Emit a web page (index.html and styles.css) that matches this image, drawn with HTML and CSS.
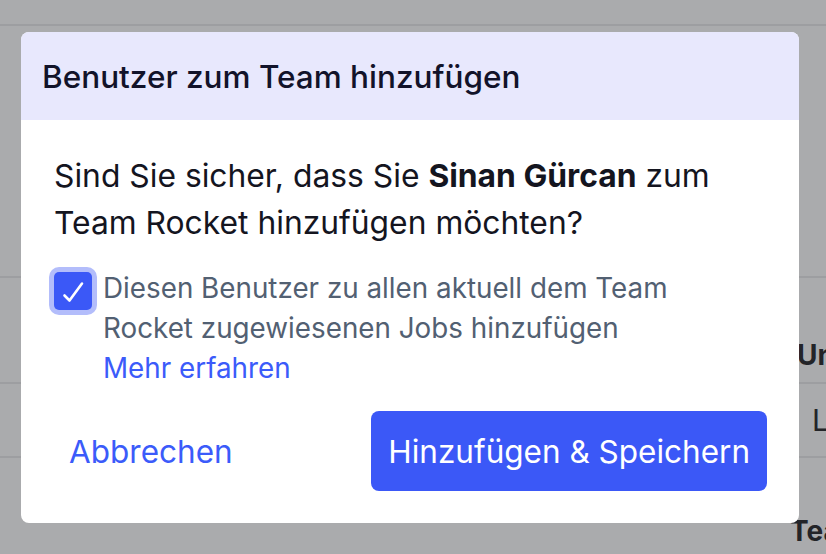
FILE: index.html
```html
<!DOCTYPE html>
<html lang="de">
<head>
    <meta charset="UTF-8">
    <meta name="viewport" content="width=device-width, initial-scale=1.0">
    <title>Benutzer zum Team hinzufügen</title>
    <link rel="stylesheet" href="styles.css">
</head>
<body>

    <!-- page behind the dialog, dimmed -->
    <div class="page">
        <div class="topbar"></div>
        <div class="spacer"></div>
        <div class="row row-head"><span class="cell-bold">Unt</span></div>
        <div class="row row-data"><span class="cell">L</span></div>
        <div class="row row-next"><span class="cell-bold">Tea</span></div>
    </div>

    <div class="modal">
        <div class="modal-header">
            <h2>Benutzer zum Team hinzufügen</h2>
        </div>
        <div class="modal-body">
            <p class="question">Sind Sie sicher, dass Sie <strong>Sinan Gürcan</strong> zum Team Rocket hinzufügen möchten?</p>

            <label class="check-row">
                <span class="checkbox">
                    <svg width="38" height="38" viewBox="0 0 38 38">
                        <path d="M10.5 23.5 L15.5 28.5 L28 11.5" fill="none" stroke="#fff" stroke-width="2.6" stroke-linecap="round" stroke-linejoin="round"/>
                    </svg>
                </span>
                <span class="check-text">
                    Diesen Benutzer zu allen aktuell dem Team Rocket zugewiesenen Jobs hinzufügen
                    <a href="#" class="link">Mehr erfahren</a>
                </span>
            </label>

            <div class="actions">
                <button type="button" class="btn-cancel">Abbrechen</button>
                <button type="button" class="btn-primary">Hinzufügen &amp; Speichern</button>
            </div>
        </div>
    </div>

</body>
</html>
```

FILE: styles.css
```css
body {
    margin: 0;
    width: 826px;
    height: 554px;
    overflow: hidden;
    position: relative;
    background-color: #aaabad;
    font-family: Inter, "Noto Sans", sans-serif;
}

/* dimmed page */
.page {
    display: flex;
    flex-direction: column;
    height: 554px;
    overflow: hidden;
}

.topbar {
    flex: none;
    height: 24px;
    border-bottom: 2px solid #9d9ea1;
}

.spacer {
    flex: none;
    height: 250px;
}

.row {
    flex: none;
    border-top: 2px solid #9d9ea1;
    display: flex;
    color: #232428;
}

.row-head {
    height: 104px;
    align-items: flex-end;
    padding-left: 797px;
}

.row-head .cell-bold {
    margin-bottom: 10px;
}

.row-data {
    height: 72px;
    align-items: center;
    padding-left: 812px;
}

.row-next {
    height: 60px;
    padding-top: 56px;
    padding-left: 790px;
}

.cell-bold {
    font-size: 28px;
    font-weight: 700;
    line-height: 34px;
}

.cell {
    font-size: 30px;
}

/* dialog */
.modal {
    position: absolute;
    left: 21px;
    top: 32px;
    width: 778px;
    height: 491px;
    background-color: #fff;
    border-radius: 8px;
    overflow: hidden;
    display: flex;
    flex-direction: column;
}

.modal-header {
    height: 88px;
    background-color: #e8e8fd;
    display: flex;
    align-items: center;
    padding: 0 21px;
}

.modal-header h2 {
    margin: 0;
    font-size: 31.5px;
    font-weight: 500;
    color: #12132a;
}

.modal-body {
    padding: 32px 32px 31px 33px;
    display: flex;
    flex-direction: column;
}

.question {
    margin: 0;
    font-size: 31.8px;
    line-height: 47px;
    color: #14151f;
}

.question strong {
    font-weight: 700;
}

.check-row {
    display: flex;
    align-items: flex-start;
    gap: 11px;
    margin-top: 22px;
    cursor: pointer;
}

.checkbox {
    flex: none;
    width: 38px;
    height: 38px;
    margin-top: 4px;
    border-radius: 5px;
    background-color: #3b58f7;
    box-shadow: 0 0 0 5px #b3bdfb;
    display: flex;
}

.check-text {
    max-width: 600px;
    font-size: 27.8px;
    line-height: 40px;
    color: #526072;
}

.link {
    display: block;
    color: #3b5bfa;
    text-decoration: none;
}

.actions {
    display: flex;
    justify-content: space-between;
    align-items: center;
    margin-top: 23px;
}

button {
    font-family: inherit;
    border: none;
    cursor: pointer;
}

.btn-cancel {
    background: none;
    color: #3b5bfa;
    font-size: 31.5px;
    padding: 0 15px;
    height: 80px;
}

.btn-primary {
    height: 80px;
    padding: 0 17px;
    background-color: #3b58f7;
    color: #fff;
    font-size: 31.5px;
    border-radius: 8px;
}

    .btn-primary:hover {
        background-color: #2f4be0;
    }
```
